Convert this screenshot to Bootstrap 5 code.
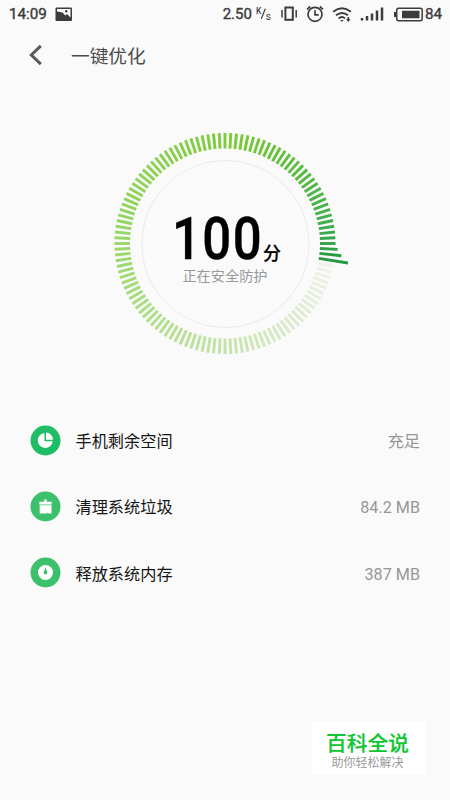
<!DOCTYPE html>
<html lang="zh-CN">
<head>
<meta charset="utf-8">
<meta name="viewport" content="width=device-width, initial-scale=1">
<title>一键优化</title>
<link href="https://cdn.jsdelivr.net/npm/bootstrap@5.3.0/dist/css/bootstrap.min.css" rel="stylesheet">
<style>
body{background:#fafafa;font-family:Roboto,"Noto Sans CJK SC",sans-serif;color:#111;width:450px;height:800px}
svg{display:block;flex:none}
.status{height:28px;font-size:15.2px;line-height:28px;color:#3c3c3c;padding:0 8px 0 9px;-webkit-text-stroke:.4px #3c3c3c}
.speed{font-size:15px}
.icon-gap{margin-left:8px}
.battery{margin-left:10px;margin-right:2px}
.topbar{height:54px;padding-left:28px}
.topbar h1{font-size:18.7px;color:#4c4c4c;line-height:28px;margin-left:27px;padding-top:3px}
.gauge{height:324px}
.gauge-ring{position:absolute;left:0;top:0}
.score{position:absolute;left:172px;top:134px;height:46px;white-space:nowrap}
.digits{font-size:58.5px;line-height:46px;font-weight:500;letter-spacing:1.6px;color:#000;width:91px;transform:scaleX(.87);transform-origin:0 0;-webkit-text-stroke:.4px #000}
.unit{font-size:18px;line-height:20px;font-weight:500;color:#000;margin-top:28px;-webkit-text-stroke:.2px #000}
.state{position:absolute;left:0;width:450px;top:184px;font-size:14.2px;line-height:20px;color:#999}
.entries{padding:1px 30px 0}
.entry{height:66.3px;font-size:16.2px}
.entry-name{margin-left:14.5px;color:#151515;padding-top:4px}
.entry-value{color:#969696;font-size:16.2px;padding-top:4px}
.promo{width:113px;height:54px;margin:115px 25px 0 auto;background:#fff;text-align:center}
.promo-name{font-size:20.7px;line-height:24px;padding-top:11px;font-weight:500;color:#10c632;-webkit-text-stroke:.2px #10c632;margin-left:-2px}
.promo-sub{font-size:12px;line-height:15px;color:#999;margin-left:-2px}
</style>
</head>
<body class="overflow-hidden">
<header class="status d-flex align-items-center">
  <span>14:09</span>
  <svg class="ms-2" width="18" height="15" viewBox="0 0 18 15"><rect x=".5" y=".5" width="16.5" height="13.500" rx="1" fill="#3c3c3c"/><path d="M2 2h13.500v8.500l-3.500-3.500-1.700 1.500L7.500 5.500 2 4.500z" fill="#fafafa"/><circle cx="11.200" cy="4.300" r="1.200" fill="#3c3c3c"/></svg>
  <span class="speed ms-auto">2.50</span>
  <svg class="ms-1" width="17" height="16" viewBox="0 0 17 16" fill="#3c3c3c" font-family="Roboto,sans-serif"><text x="0" y="8" font-size="8.500" font-weight="500">K</text><path d="M5.300 12.800L9.300 2.800" stroke="#3c3c3c" stroke-width="1.200"/><text x="9.800" y="13.500" font-size="10" font-weight="400">s</text></svg>
  <svg class="icon-gap" width="17" height="16" viewBox="0 0 17 16" fill="none" stroke="#3c3c3c"><rect x="4.400" y="1.500" width="7.400" height="12.300" stroke-width="2"/><path d="M1 4v7.500M15.200 4v7.500" stroke-width="1.500"/></svg>
  <svg class="icon-gap" width="18" height="18" viewBox="0 0 18 18" fill="none" stroke="#3c3c3c" stroke-width="1.700"><circle cx="9" cy="9.300" r="7"/><path d="M9 5.300v4.500h3.700M1 4.300L4.200 1.500M17 4.300l-3.200-2.800"/></svg>
  <svg class="icon-gap" width="20" height="17" viewBox="0 0 20 17" fill="none" stroke="#3c3c3c" stroke-width="1.900"><path d="M1.200 5.800Q10-1.200 18.800 5.800M4 9.300Q10 4.500 16 9.300M6.600 12.400Q10 9.800 13 12.400"/><path d="M8.200 14h3.400L9.900 15.900zM14 13h4.500l-2.200 3zM15.500 11h1.600v3h-1.600z" fill="#3c3c3c" stroke="none"/></svg>
  <svg class="icon-gap" width="24" height="16" viewBox="0 0 24 16" stroke="#3c3c3c" stroke-width="2.500"><path d="M2 12v2.500M7 10v4.500M12 7.500v7M17 4.500v10M22 1.500v13"/></svg>
  <svg class="battery" width="29" height="15" viewBox="0 0 29 15"><rect x="2.700" y="1.300" width="25.500" height="12.500" rx="2" fill="none" stroke="#3c3c3c" stroke-width="1.500"/><path d="M0 5h2.500v5H0z M8 3.800h17.500v7.500H8z" fill="#3c3c3c"/></svg>
  <span>84</span>
</header>
<nav class="topbar d-flex align-items-center">
  <svg width="16" height="22" viewBox="0 0 16 22"><path d="M12.800 1.800L3.300 11l9.500 9.200" fill="none" stroke="#5a5a5a" stroke-width="3"/></svg>
  <h1 class="mb-0 fw-normal">一键优化</h1>
</nav>
<main>
  <section class="gauge position-relative">
    <svg class="gauge-ring" width="450" height="324" viewBox="0 82 450 324">
      <circle cx="225.500" cy="244" r="83.500" fill="none" stroke="#ebebec" stroke-width="1"/>
      <g id="ticks" stroke-width="2.900"></g>
    </svg>
    <div class="score d-flex"><span class="digits">100</span><span class="unit">分</span></div>
    <div class="state text-center">正在安全防护</div>
  </section>
  <section class="entries">
    <div class="entry d-flex align-items-center">
      <svg width="31" height="31" viewBox="0 0 31 31"><circle cx="15.500" cy="15.500" r="15" fill="#1fbd66"/><path d="M14.500 8a7.500 7.500 0 1 0 8.200 8.300h-8.200z" fill="#fff"/><path d="M16 7.500a7.200 7.200 0 0 1 7 7.200h-7z" fill="#fff"/></svg>
      <span class="entry-name">手机剩余空间</span><span class="entry-value ms-auto">充足</span>
    </div>
    <div class="entry d-flex align-items-center">
      <svg width="31" height="31" viewBox="0 0 31 31"><circle cx="15.500" cy="15.500" r="15" fill="#3cc06b"/><path d="M14.300 8.500h2.400v2.300h5v2.600H9.300v-2.600h5zM9.700 14.200h11.800v8.300h-3l-1-1.200v1.200H9.700z" fill="#fff"/></svg>
      <span class="entry-name">清理系统垃圾</span><span class="entry-value ms-auto">84.2 MB</span>
    </div>
    <div class="entry d-flex align-items-center">
      <svg width="31" height="31" viewBox="0 0 31 31"><circle cx="15.500" cy="15.500" r="15" fill="#3cc06b"/><circle cx="15.500" cy="15.500" r="7.500" fill="#fff"/><path d="M15.500 10.500l1.700 4.500a1.800 1.800 0 1 1-3.400 0z" fill="#3cc06b"/></svg>
      <span class="entry-name">释放系统内存</span><span class="entry-value ms-auto">387 MB</span>
    </div>
  </section>
  <aside class="promo">
    <div class="promo-name">百科全说</div>
    <div class="promo-sub">助你轻松解决</div>
  </aside>
</main>
<script src="https://cdn.jsdelivr.net/npm/bootstrap@5.3.0/dist/js/bootstrap.bundle.min.js"></script>
<script>
// Gauge ticks run clockwise, from the faint tail to the long pointer.
const stops=[[12,[239,241,235]],[50,[219,235,206]],[90,[196,227,168]],[135,[174,222,134]],[180,[151,215,105]],[225,[139,210,85]],[275,[123,203,54]],[315,[91,187,65]],[350,[65,174,79]],[369,[38,154,64]]];
const g=document.getElementById('ticks');
const outer={363:112.8,366:117,369:124.500};
for(let a=12;a<=369;a+=3){
  let i=0; while(i<stops.length-2&&a>stops[i+1][0])i++;
  const [a0,c0]=stops[i],[a1,c1]=stops[i+1],t=(a-a0)/(a1-a0);
  const c=c0.map((v,k)=>Math.round(v+(c1[k]-v)*t));
  const l=document.createElementNS('http://www.w3.org/2000/svg','line'),r=a*Math.PI/180,R=outer[a]||110.500;
  l.setAttribute('x1',225+95*Math.cos(r));l.setAttribute('y1',243.500+95*Math.sin(r));
  l.setAttribute('x2',225+R*Math.cos(r));l.setAttribute('y2',243.500+R*Math.sin(r));
  l.setAttribute('stroke',`rgb(${c})`);g.appendChild(l);
}
</script>
</body>
</html>
